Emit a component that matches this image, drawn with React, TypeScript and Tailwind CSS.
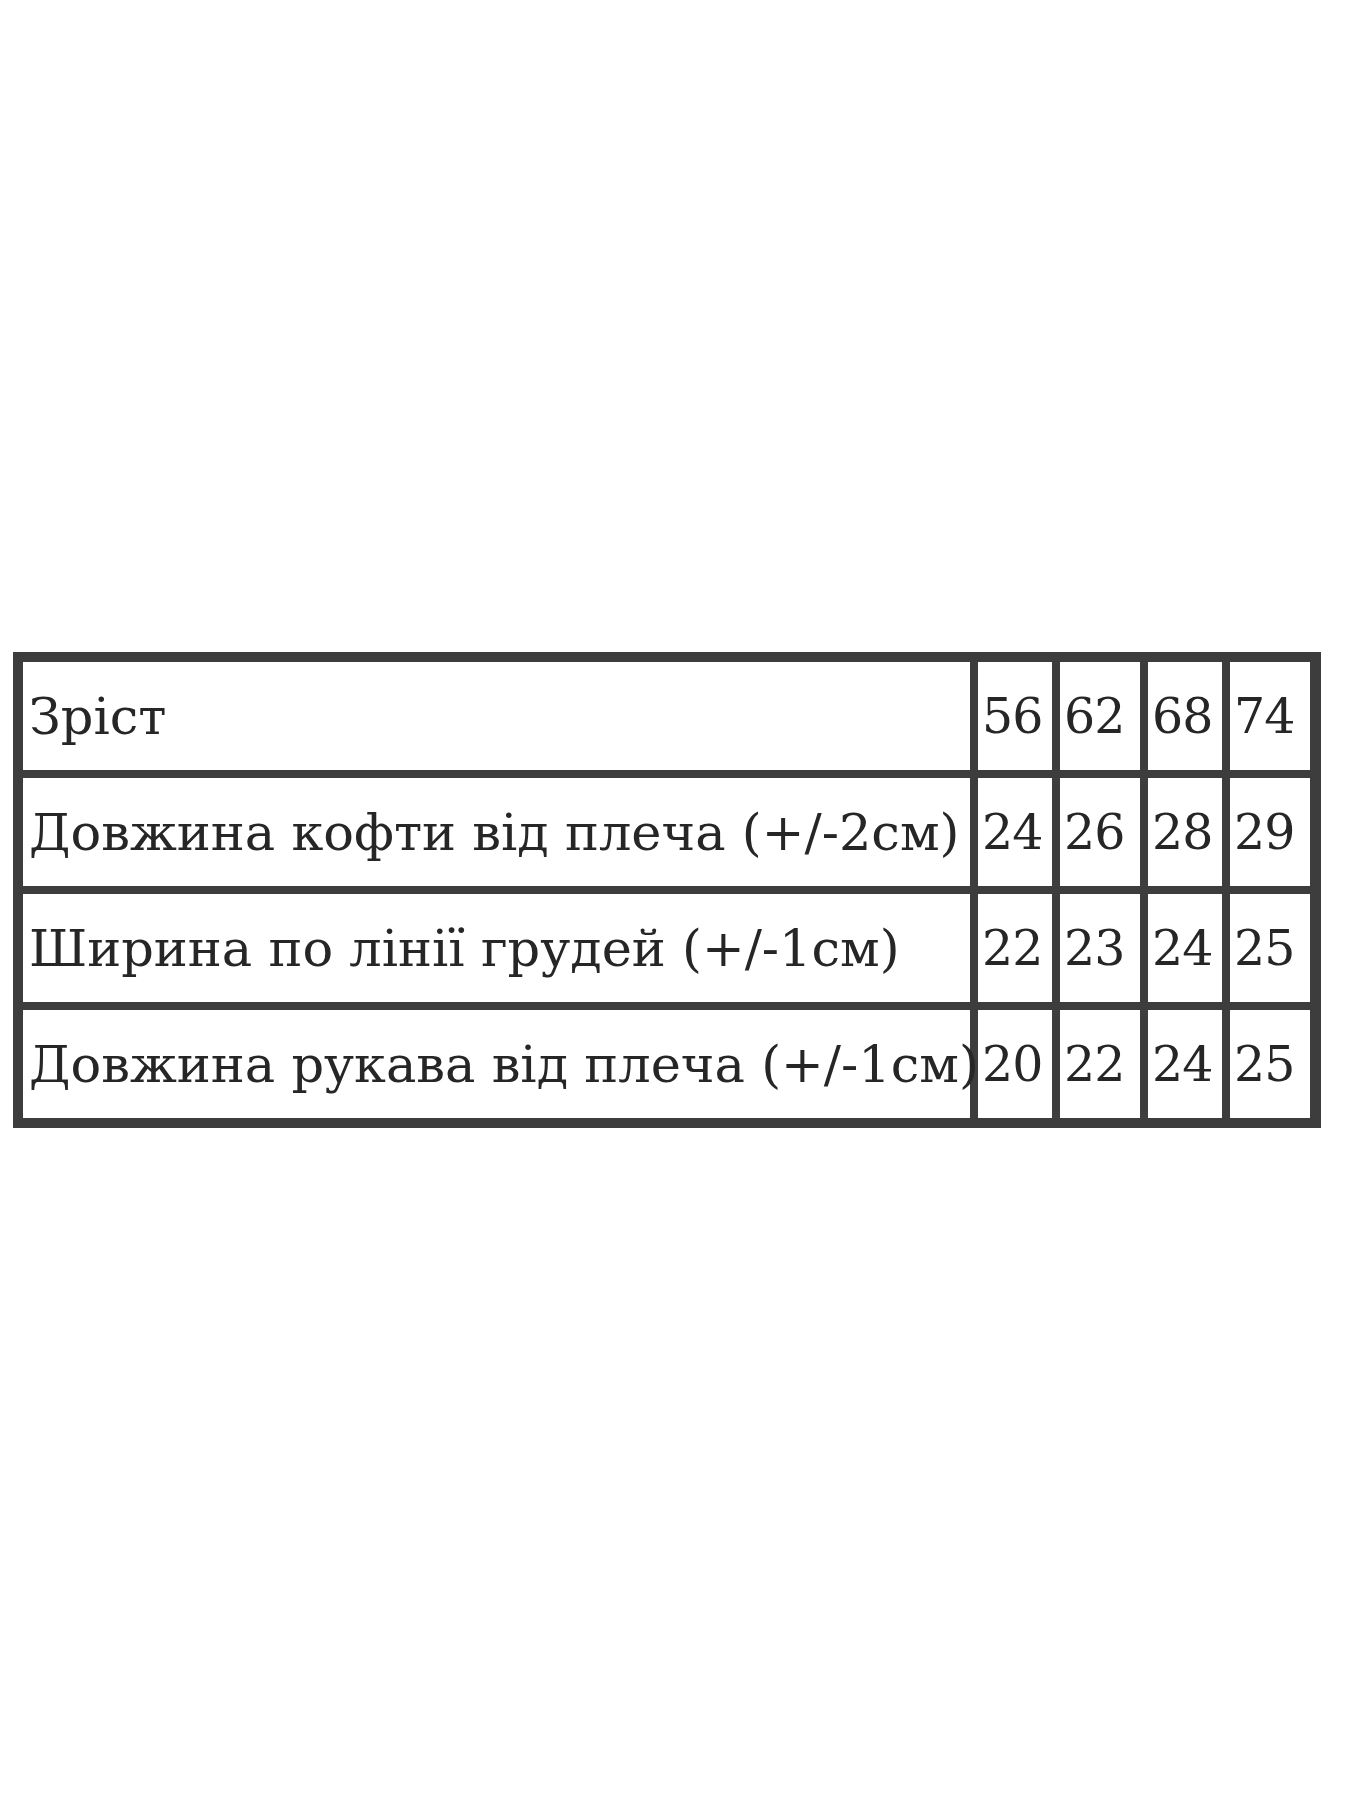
const rows = [
  { label: "Зріст", values: ["56", "62", "68", "74"] },
  { label: "Довжина кофти від плеча (+/-2см)", values: ["24", "26", "28", "29"] },
  { label: "Ширина по лінії грудей (+/-1см)", values: ["22", "23", "24", "25"] },
  { label: "Довжина рукава від плеча (+/-1см)", values: ["20", "22", "24", "25"] },
];

export default function App() {
  return (
    <div className="min-h-[1800px] w-[1350px] bg-white pt-[652px] pl-[13px] font-['DejaVu_Serif',serif] text-[#262626]">
      <div className="grid w-[1308px] grid-cols-[947px_74px_80px_74px_80px] gap-[8px] bg-[#3d3d3d] p-[10px]">
        {rows.map((row) => (
          <div key={row.label} className="contents">
            <div className="flex h-[108px] items-center bg-white pl-[6px] text-[51px] leading-none whitespace-nowrap">
              {row.label}
            </div>
            {row.values.map((v, i) => (
              <div
                key={i}
                className="flex h-[108px] items-center bg-white pl-[4px] text-[49px] leading-none tracking-[-1px] whitespace-nowrap"
              >
                {v}
              </div>
            ))}
          </div>
        ))}
      </div>
    </div>
  );
}
